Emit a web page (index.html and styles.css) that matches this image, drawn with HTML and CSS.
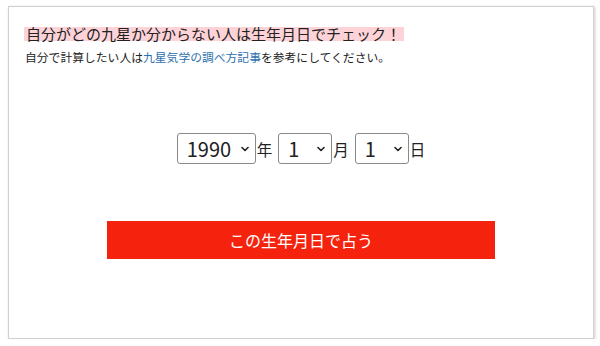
FILE: index.html
```html
<!DOCTYPE html>
<html lang="ja">
<head>
    <meta charset="UTF-8">
    <meta name="viewport" content="width=device-width, initial-scale=1.0">
    <title>九星チェック</title>
    <link rel="stylesheet" href="styles.css">
</head>
<body>

    <div class="card">
        <h2 class="lead"><span>自分がどの九星か分からない人は生年月日でチェック！</span></h2>
        <p class="note">自分で計算したい人は<a href="#">九星気学の調べ方記事</a>を参考にしてください。</p>

        <form class="birth-form" onsubmit="return false;">
            <div class="date-row">
                <select class="sel year">
                    <option>1989</option>
                    <option selected>1990</option>
                    <option>1991</option>
                </select><span class="unit">年</span>
                <select class="sel small">
                    <option selected>1</option>
                    <option>2</option>
                    <option>3</option>
                </select><span class="unit">月</span>
                <select class="sel small">
                    <option selected>1</option>
                    <option>2</option>
                    <option>3</option>
                </select><span class="unit">日</span>
            </div>
            <button class="submit-btn" type="submit">この生年月日で占う</button>
        </form>
    </div>

</body>
</html>
```

FILE: styles.css
```css
/* 九星チェック フォーム */
body {
    margin: 0;
    padding: 6px 6px 0 8px;
    background-color: #fff;
    font-family: "Noto Sans CJK JP", "Noto Sans", sans-serif;
    color: #222;
}
.card {
    box-sizing: border-box;
    height: 333px;
    border: 1px solid #d0d0d0;
    box-shadow: 1px 1px 3px rgba(0,0,0,0.2);
    padding: 20px 15px;
    background-color: #fff;
}
.lead {
    margin: 0;
    font-size: 15px;
    font-weight: normal;
    line-height: 14px;
}
.lead span {
    display: inline-block;
    background-color: #fdd3d8;
    padding: 0 3px 0 2px;
    line-height: 14px;
}
.note {
    margin: 7px 0 0 1px;
    font-size: 11.8px;
    line-height: 18px;
}
.note a {
    color: #2d6fae;
    text-decoration: none;
}
.birth-form {
    display: flex;
    flex-direction: column;
    align-items: center;
}
.date-row {
    margin-top: 67px;
    display: flex;
    align-items: center;
}
.sel {
    -webkit-appearance: none;
    appearance: none;
    box-sizing: border-box;
    height: 31px;
    border: 1px solid #8a8a8a;
    border-radius: 3px;
    background-color: #fff;
    background-image: url("data:image/svg+xml,%3Csvg xmlns='http://www.w3.org/2000/svg' width='8' height='6' viewBox='0 0 8 6'%3E%3Cpath d='M1 1.5 L4 4.5 L7 1.5' fill='none' stroke='%23222' stroke-width='1.6' stroke-linecap='round' stroke-linejoin='round'/%3E%3C/svg%3E");
    background-repeat: no-repeat;
    background-position: right 6px center;
    background-size: 8px 6px;
    font-family: "Noto Sans CJK JP", "Noto Sans", sans-serif;
    font-size: 20px;
    color: #222;
    padding: 0 0 0 9px;
    line-height: 29px;
}
.sel.year {
    width: 79px;
}
.sel.small {
    width: 54px;
}
.unit {
    font-size: 15.5px;
    margin: 0 6px 0 1px;
}
.unit:last-child {
    margin-right: 0;
}
.submit-btn {
    margin-top: 57px;
    width: 388px;
    height: 38px;
    border: none;
    background-color: #f5230d;
    color: #fff;
    font-family: "Noto Sans CJK JP", "Noto Sans", sans-serif;
    font-size: 16px;
    cursor: pointer;
}
.submit-btn:hover {
    background-color: #e01e08;
}
```
